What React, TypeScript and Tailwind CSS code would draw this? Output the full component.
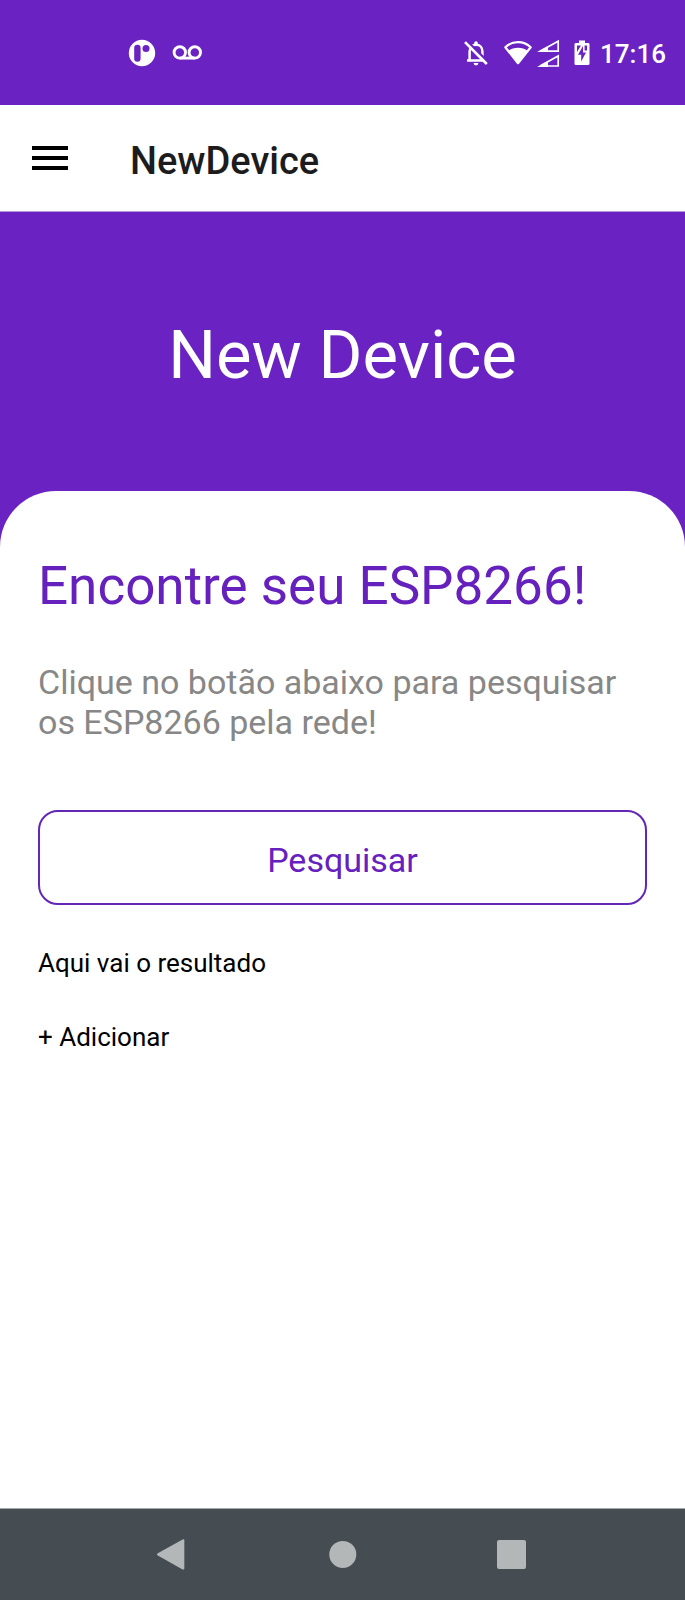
import React from "react";

function AppBadgeIcon() {
  return (
    <svg viewBox="0 0 28 28" className="h-7 w-7" aria-hidden="true">
      <circle cx="14" cy="14" r="13.2" fill="#fff" />
      <rect x="6.2" y="5.8" width="6.4" height="17" rx="3.2" fill="#6a22c3" />
      <circle cx="18" cy="9.4" r="3.5" fill="#6a22c3" />
    </svg>
  );
}

function VoicemailIcon() {
  return (
    <svg viewBox="0 0 30 16" className="h-4 w-[30px]" fill="none" stroke="#fff" strokeWidth="2.9" aria-hidden="true">
      <circle cx="7.8" cy="7.4" r="5.7" />
      <circle cx="22.8" cy="7.4" r="5.7" />
      <path d="M7.8 13.1H22.8" />
    </svg>
  );
}

function BellOffIcon() {
  return (
    <svg viewBox="0 0 24 26" className="h-[26px] w-6" fill="none" aria-hidden="true">
      <path d="M5.6 20V11.500C5.600 7.400 8.200 4.800 12 4.800S18.400 7.400 18.400 11.500V20M3 20.600H21" stroke="#fff" strokeWidth="2.500" />
      <path d="M10.200 4.800V3a1.800 1.800 0 0 1 3.600 0V4.800ZM9.600 23h4.800a2.400 2.400 0 0 1-4.800 0Z" fill="#fff" />
      <path d="M3.200 1.200L24.500 22.500" stroke="#6a22c3" strokeWidth="2.400" />
      <path d="M1 2.200L22.800 24" stroke="#fff" strokeWidth="2.600" />
    </svg>
  );
}

function WifiIcon() {
  return (
    <svg viewBox="0 0 28 26" className="h-[26px] w-7" aria-hidden="true">
      <path d="M1.300 7.200C8.500 0.400 19.500 0.400 26.700 7.200L14 23.200Z" fill="none" stroke="#fff" strokeWidth="2.200" strokeLinejoin="round" />
      <path d="M4.200 11C9.800 6.800 18.200 6.800 23.800 11L14 23.400Z" fill="#fff" />
    </svg>
  );
}

function DualSignalIcon() {
  return (
    <svg viewBox="0 0 24 28" className="h-7 w-6" aria-hidden="true">
      <g fill="none" stroke="#fff" strokeWidth="1.700">
        <path d="M4 12.200L22.200 2.200V12.200Z" />
        <path d="M4 27L22.200 17V27Z" />
      </g>
      <path d="M1 13L12 7V13ZM1 28L12 22V28Z" fill="#fff" />
    </svg>
  );
}

function BatteryIcon() {
  return (
    <svg viewBox="0 0 16 26" className="h-[26px] w-4" aria-hidden="true">
      <path d="M5 0.500H11V3H14.200Q15.500 3 15.500 4.300V23.700Q15.500 25 14.200 25H1.800Q0.500 25 0.500 23.700V4.300Q0.500 3 1.800 3H5Z" fill="#fff" />
      <path d="M9 6L4 14.800H7.200V21.500L12 12.600H9Z" fill="#6a22c3" />
      <path d="M3 5.500H7L3 12ZM10.600 5.500H13V10.500H10.600Z" fill="#6a22c3" />
    </svg>
  );
}

function StatusBar() {
  return (
    <div className="flex h-[105px] items-center justify-between bg-[#6a22c3] pr-[19px] pl-32 text-white">
      <div className="flex items-center gap-4">
        <AppBadgeIcon />
        <VoicemailIcon />
      </div>
      <div className="flex items-center">
        <div className="flex items-center gap-1">
          <div className="mr-3">
            <BellOffIcon />
          </div>
          <WifiIcon />
          <DualSignalIcon />
        </div>
        <div className="mr-2.5 ml-3.5">
          <BatteryIcon />
        </div>
        <time className="pt-0.5 text-[26px] leading-8 font-medium">17:16</time>
      </div>
    </div>
  );
}

function AppBar() {
  return (
    <header className="flex h-[107px] items-center gap-[62px] border-b border-[#b49ad8] bg-white pl-8">
      <button type="button" aria-label="Menu" className="flex w-9 flex-col gap-1.5">
        <span className="h-1 bg-black" />
        <span className="h-1 bg-black" />
        <span className="h-1 bg-black" />
      </button>
      <span className="pt-1.5 text-[38px] leading-[44px] font-medium text-[#1c1c1e]">NewDevice</span>
    </header>
  );
}

function NavigationBar() {
  return (
    <nav className="flex h-23 items-center justify-center border-t border-[#a3a7aa] bg-[#454d52]">
      <button type="button" aria-label="Voltar" className="flex w-[170px] justify-center">
        <svg viewBox="0 0 32 32" className="h-8 w-8" fill="#b3b7b8">
          <path d="M0.800 14.200L25.600 0.400Q27.300 -0.300 27.300 1.200V29.600Q27.300 31.100 25.600 30.400L0.800 16.600Q-0.800 15.400 0.800 14.200Z" />
        </svg>
      </button>
      <button type="button" aria-label="Início" className="flex w-[170px] justify-center">
        <svg viewBox="0 0 32 32" className="h-8 w-8" fill="#b3b7b8">
          <circle cx="15.800" cy="15.400" r="13.500" />
        </svg>
      </button>
      <button type="button" aria-label="Recentes" className="flex w-[170px] justify-center">
        <svg viewBox="0 0 32 32" className="h-8 w-8" fill="#b3b7b8">
          <rect x="0" y="1" width="29" height="29" rx="2" />
        </svg>
      </button>
    </nav>
  );
}

export default function App() {
  return (
    <div className="flex min-h-screen flex-col bg-white font-['Roboto',sans-serif]">
      <StatusBar />
      <AppBar />
      <main className="flex flex-1 flex-col bg-[#6a22c3]">
        <h1 className="pt-[103px] pb-24 text-center text-[67px] leading-[80px] text-white">New Device</h1>
        <section className="flex flex-1 flex-col items-start rounded-t-[56px] bg-white px-[38px] pt-[63px]">
          <h2 className="text-[53px] leading-[64px] text-[#6520be]">Encontre seu ESP8266!</h2>
          <p className="mt-11 text-[34px] leading-10 text-[#878787]">
            Clique no botão abaixo para pesquisar os ESP8266 pela rede!
          </p>
          <button
            type="button"
            className="mt-17 h-[95px] w-full rounded-[20px] border-2 border-[#6426b4] pt-1 text-[34px] leading-10 text-[#6520be]"
          >
            Pesquisar
          </button>
          <p className="mt-[42px] text-[26px] leading-8 text-black">Aqui vai o resultado</p>
          <button type="button" className="mt-[42px] text-[26px] leading-8 text-black">
            + Adicionar
          </button>
        </section>
      </main>
      <NavigationBar />
    </div>
  );
}
